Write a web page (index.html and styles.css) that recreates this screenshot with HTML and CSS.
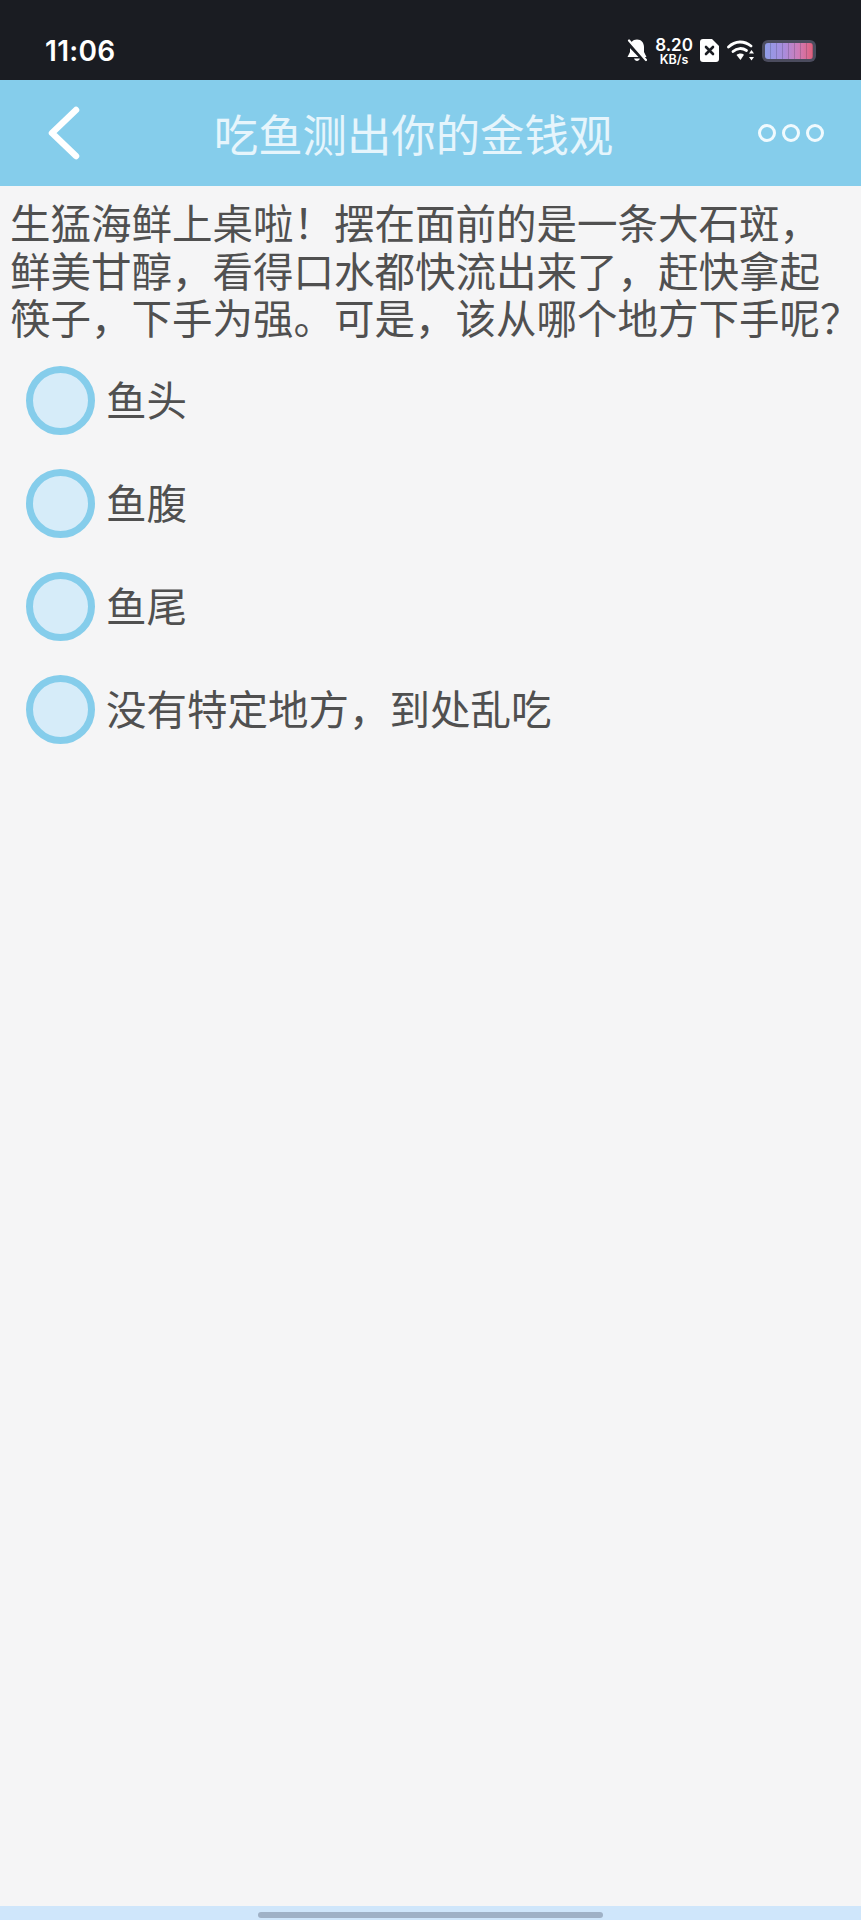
FILE: index.html
```html
<!DOCTYPE html>
<html lang="zh-CN">
<head>
<meta charset="utf-8">
<title>吃鱼测出你的金钱观</title>
<link rel="stylesheet" href="styles.css">
</head>
<body>
<div class="phone">
  <div class="status">
    <span class="time">11:06</span>
    <div class="status-icons">
      <svg class="bell" viewBox="0 0 20 23"><path d="M10 0.500c-4.500 0-7 3.500-7 7.500v5L0.500 18h19L17 13V8C17 4 14.500 0.500 10 0.500zM7 19.500c.6 1.600 1.700 2.500 3 2.500s2.400-.9 3-2.500z" fill="#fff"/><path d="M0 3l19 20" stroke="#1a1c22" stroke-width="4"/><path d="M2 1.500l17 19.500" stroke="#fff" stroke-width="2.200" stroke-linecap="round"/></svg>
      <div class="speed"><span class="speed-num">8.20</span><span class="speed-unit">KB/s</span></div>
      <svg class="sim" viewBox="0 0 19 23"><path d="M3 0h9l7 7v13a3 3 0 0 1-3 3H3a3 3 0 0 1-3-3V3a3 3 0 0 1 3-3z" fill="#fff"/><path d="M6 8l7 7M13 8l-7 7" stroke="#1a1c22" stroke-width="2.600" stroke-linecap="round"/></svg>
      <svg class="wifi" viewBox="0 0 28 21"><g fill="none" stroke="#fff" stroke-width="2.800" stroke-linecap="round"><path d="M1.500 7C8.500 .5 17 .5 24 6"/><path d="M6 11.500c4-3.800 9.500-3.800 13.500-1"/></g><path d="M9.500 15c2.300-2 5.500-2 7.500-.3L13.500 20z" fill="#fff"/><path d="M24.500 10l2.500 3.500h-5zM24.500 20.500l-2.500-3.500h5z" fill="#fff"/></svg>
      <div class="battery"><div class="battery-fill"></div></div>
    </div>
  </div>
  <header class="bar">
    <svg class="back" viewBox="0 0 34 54"><path d="M29 4L5 27l24 23" fill="none" stroke="#fff" stroke-width="6.500" stroke-linecap="round" stroke-linejoin="round"/></svg>
    <h1 class="title">吃鱼测出你的金钱观</h1>
    <div class="dots"><i class="dot"></i><i class="dot"></i><i class="dot"></i></div>
  </header>
  <main class="content">
    <p class="question">生猛海鲜上桌啦&#65281;摆在面前的是一条大石斑&#65292;<br>鲜美甘醇&#65292;看得口水都快流出来了&#65292;赶快拿起<br>筷子&#65292;下手为强&#12290;可是&#65292;该从哪个地方下手呢&#65311;</p>
    <ul class="options">
      <li class="option"><span class="radio"></span><span class="label">鱼头</span></li>
      <li class="option"><span class="radio"></span><span class="label">鱼腹</span></li>
      <li class="option"><span class="radio"></span><span class="label">鱼尾</span></li>
      <li class="option"><span class="radio"></span><span class="label">没有特定地方&#65292;到处乱吃</span></li>
    </ul>
  </main>
  <div class="nav"><div class="handle"></div></div>
</div>
</body>
</html>
```
FILE: styles.css
```css
* { box-sizing: border-box; }
html, body { margin: 0; padding: 0; }
body { font-family: "Noto Sans CJK SC", "Noto Sans", sans-serif; background: #f5f5f6; }
.phone { width: 861px; height: 1920px; display: flex; flex-direction: column; overflow: hidden; }

.status { height: 80px; flex: none; background: #1a1c22; display: flex; align-items: center; justify-content: space-between; padding: 21px 45px 0 45px; color: #fff; }
.time { font-family: Inter, sans-serif; font-weight: 600; font-size: 28px; line-height: 1; letter-spacing: .3px; }
.status-icons { display: flex; align-items: center; }
.bell { width: 20px; height: 23px; margin-right: 9px; }
.speed { display: flex; flex-direction: column; align-items: center; width: 36px; margin-right: 8px; font-family: Inter, sans-serif; font-weight: 600; color: #fff; }
.speed-num { font-size: 17px; line-height: 17px; }
.speed-unit { font-size: 12.500px; line-height: 11px; }
.sim { width: 19px; height: 23px; margin-right: 8px; }
.wifi { width: 28px; height: 21px; margin-right: 7px; }
.battery { width: 54px; height: 22px; border-radius: 6px; background: #4b4c5e; padding: 3px; }
.battery-fill { height: 100%; border-radius: 3px; background: repeating-linear-gradient(90deg, transparent 0 5px, rgba(40,40,60,.22) 5px 6px), linear-gradient(90deg, #8f9de8, #a98cdc 40%, #cf7cb8 70%, #e0607c); }

.bar { height: 106px; flex: none; background: #85cdeb; display: flex; align-items: center; padding: 0 37px 0 47px; }
.back { width: 34px; height: 54px; flex: none; }
.title { margin: 0 12px 0 0; flex: 1; text-align: center; font-size: 44.400px; font-weight: 400; color: #e6f5fc; line-height: 1; }
.dots { display: flex; gap: 6px; flex: none; }
.dot { width: 18px; height: 18px; border-radius: 50%; border: 3px solid #f0fafe; display: block; }

.content { flex: 1; background: #f5f5f6; padding: 12px 0 0 10px; color: #505050; }
.question { margin: 0 0 8px; font-size: 40.500px; line-height: 47.500px; white-space: nowrap; }
.options { list-style: none; margin: 0; padding: 0; }
.option { height: 103px; display: flex; align-items: center; padding-left: 16px; gap: 11px; font-size: 40.500px; line-height: 48px; }
.label { margin-bottom: 2px; }
.radio { width: 69px; height: 69px; flex: none; border-radius: 50%; border: 7.500px solid #85cdeb; background: #d6ecf9; }

.nav { height: 14px; flex: none; background: #cfe6fb; display: flex; justify-content: center; align-items: flex-end; padding-bottom: 2px; }
.handle { width: 345px; height: 6px; border-radius: 3px; background: #9fb1c6; }
```
